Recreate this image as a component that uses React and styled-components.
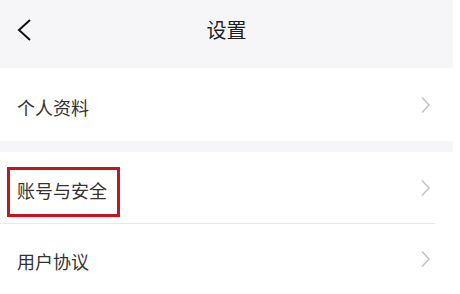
import React from "react";
import styled, { createGlobalStyle } from "styled-components";

const GlobalStyle = createGlobalStyle`
  html, body {
    margin: 0;
    padding: 0;
    background: #ffffff;
    font-family: "Noto Sans CJK SC", "Noto Sans", sans-serif;
  }
`;

const Page = styled.div`
  width: 453px;
  height: 294px;
  background: #f6f6f8;
  overflow: hidden;
`;

const Header = styled.div`
  position: relative;
  height: 68px;
  display: flex;
  align-items: center;
  justify-content: center;
`;

const BackButton = styled.div`
  position: absolute;
  left: 0;
  top: 0;
  width: 50px;
  height: 60px;
  display: flex;
  align-items: center;
  justify-content: center;

  svg {
    display: block;
  }
`;

const Title = styled.h1`
  margin: 0 0 8px;
  font-size: 20px;
  line-height: 1;
  font-weight: 400;
  color: #1f1f1f;
`;

const Group = styled.div`
  background: #ffffff;
  margin-bottom: ${(props) => props.$gap || 0}px;
`;

const Row = styled.div`
  height: ${(props) => props.$height || 72}px;
  display: flex;
  align-items: center;
  justify-content: space-between;
  padding: 0 21px 0 17px;
  border-bottom: ${(props) => (props.$divider ? "1px solid #e8e9ec" : "none")};
  margin-right: ${(props) => (props.$divider ? 18 : 0)}px;
  padding-right: ${(props) => (props.$divider ? 3 : 21)}px;
`;

const Label = styled.span`
  position: relative;
  font-size: 18px;
  color: #333333;
  line-height: 1;
  padding-top: 4px;

  ${(props) =>
    props.$highlight &&
    `
    &::after {
      content: "";
      position: absolute;
      left: -10px;
      right: -13px;
      top: -10px;
      bottom: -18px;
      border: 3px solid #c4161c;
    }
  `}
`;

const Chevron = () => (
  <svg width="12" height="18" viewBox="0 0 12 18">
    <polyline
      points="2,1.5 9,9 2,16.5"
      fill="none"
      stroke="#c3c5ca"
      strokeWidth="1.6"
    />
  </svg>
);

const BackIcon = () => (
  <svg width="16" height="24" viewBox="0 0 16 24">
    <polyline
      points="13,2 2,12 13,22"
      fill="none"
      stroke="#111111"
      strokeWidth="2"
    />
  </svg>
);

const App = () => {
  return (
    <>
      <GlobalStyle />
      <Page>
        <Header>
          <BackButton>
            <BackIcon />
          </BackButton>
          <Title>设置</Title>
        </Header>
        <Group $gap={11}>
          <Row $height={73}>
            <Label>个人资料</Label>
            <Chevron />
          </Row>
        </Group>
        <Group>
          <Row $divider $height={71}>
            <Label $highlight>账号与安全</Label>
            <Chevron />
          </Row>
          <Row $height={70}>
            <Label>用户协议</Label>
            <Chevron />
          </Row>
        </Group>
      </Page>
    </>
  );
};

export default App;
